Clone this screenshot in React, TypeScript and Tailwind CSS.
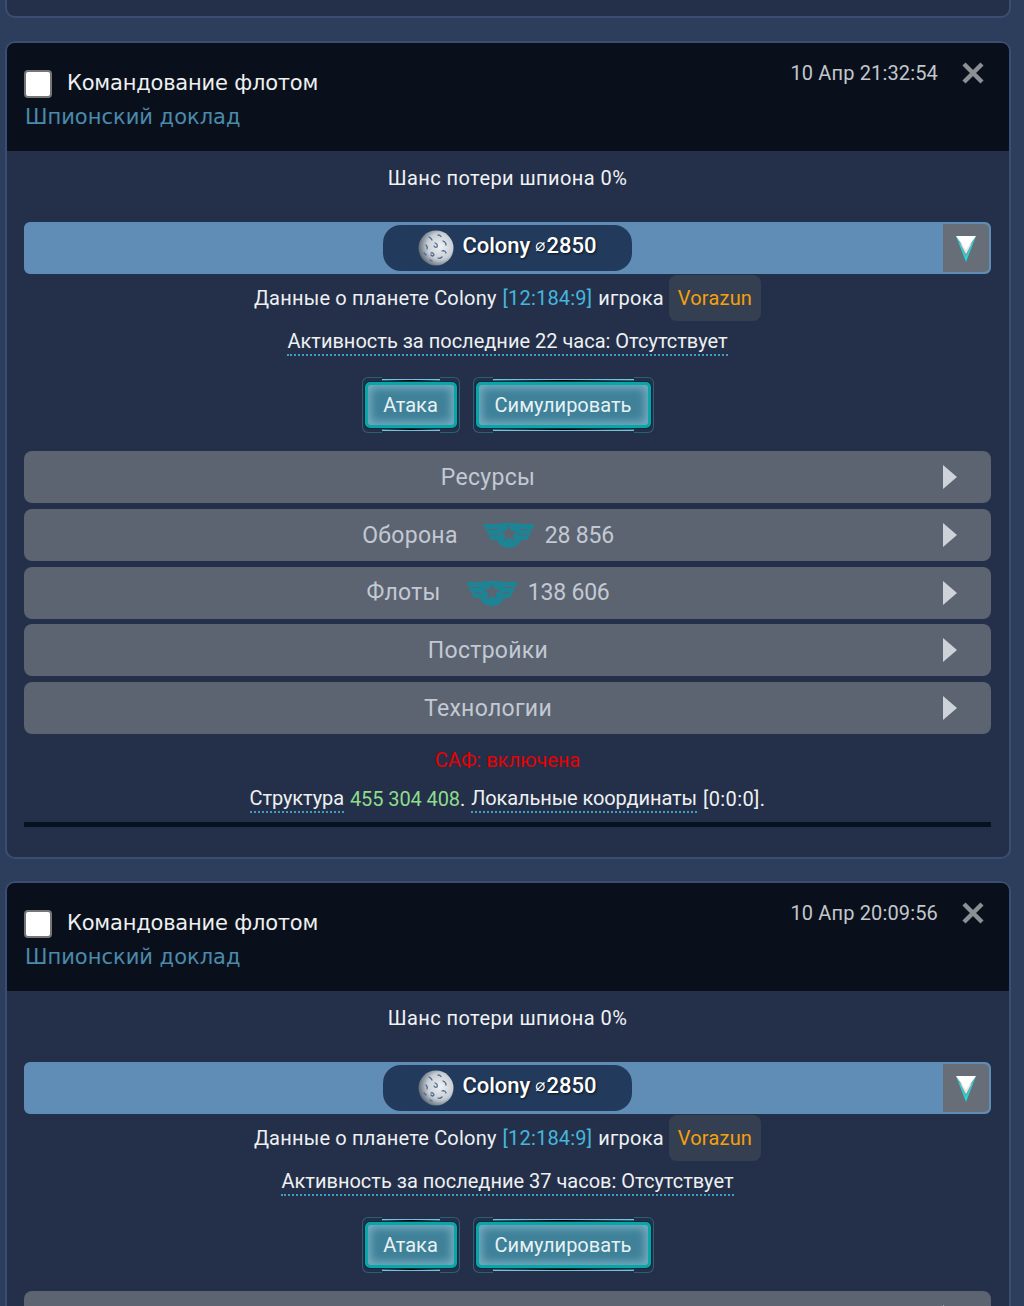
import type { FC } from "react";

const din = "font-['Roboto','Liberation_Sans',sans-serif]";

const Moon: FC<{ id: string }> = ({ id }) => (
    <svg width="36" height="36" viewBox="0 0 36 36" className="shrink-0">
        <defs>
            <radialGradient id={id} cx="62%" cy="45%" r="62%">
                <stop offset="0%" stopColor="#eef1f3" />
                <stop offset="60%" stopColor="#c7ced5" />
                <stop offset="100%" stopColor="#5f6a76" />
            </radialGradient>
        </defs>
        <circle cx="18" cy="18" r="17.5" fill={`url(#${id})`} />
        <g fill="none" stroke="#4f6a92" strokeWidth="1.3" strokeLinecap="round">
            <path d="M11 7 q2 1 3 3" />
            <path d="M20 5 q2 0 3 1.5" />
            <path d="M25 11 q3 1 3 4" />
            <path d="M8 15 q2 2 1 4" />
            <path d="M17 13 q3 1 2 4 q-2 1 -3 -1" />
            <path d="M24 21 q3 -1 4 2" />
            <path d="M13 23 q2 -1 3 2 q-1 2 -3 0" />
            <path d="M6 23 l2 2" />
            <path d="M20 28 q2 1 4 -1" />
            <path d="M12 30 l2 1" />
        </g>
    </svg>
);

const DropArrow = () => (
    <svg width="22" height="27" viewBox="0 0 22 27">
        <path d="M1 1 L11 27 L21 1 L11 11 Z" fill="#17dcd4" />
        <path d="M2 2 L11 22 L20 2 L11 9 Z" fill="#8f949c" />
        <path d="M5 8 L11 19 L17 8 L11 13 Z" fill="#e6e8ec" />
        <path d="M1 1 L21 1 L11 15 Z" fill="#ffffff" />
    </svg>
);

const Wings = () => (
    <svg width="52" height="26" viewBox="0 0 52 26" className="shrink-0">
        <path
            fill="#1c8494"
            fillRule="evenodd"
            d="M0 1 H16 Q26 -3 36 1 H52 L44 17 H38 L36 21 Q26 29 16 21 L14 17 H8 Z M26 2 L23.8 7.9 L17.4 8.2 L22.4 12.2 L20.7 18.3 L26 14.8 L31.3 18.3 L29.6 12.2 L34.6 8.2 L28.2 7.9 Z"
        />
        <path d="M4 6.5 H15 M8 12 H17 M48 6.5 H37 M44 12 H35" stroke="#5c6472" strokeWidth="1" />
    </svg>
);

const FrameButton: FC<{ label: string; width: string }> = ({ label, width }) => (
    <div className={`relative h-[56px] ${width} px-[3px] py-[5px]`}>
        <div className="absolute left-0 top-0 h-full w-[20px] rounded-l-[6px] border border-r-0 border-[#2c6070]" />
        <div className="absolute right-0 top-0 h-full w-[20px] rounded-r-[6px] border border-l-0 border-[#2c6070]" />
        <div className="absolute left-[20px] right-[20px] top-[2px] h-[3px] border-t border-[#7fbcdc] bg-[linear-gradient(90deg,#0a7f88,#000_50%,#0a7f88)]" />
        <div className="absolute bottom-[2px] left-[20px] right-[20px] h-[3px] border-b border-[#7fbcdc] bg-[linear-gradient(90deg,#0a7f88,#000_50%,#0a7f88)]" />
        <div className="relative flex h-full items-center justify-center rounded-[5px] border-[3px] border-[#0aa5a8] bg-[#3f8199] shadow-[inset_0_0_8px_3px_#76aec2,0_0_0_1px_#0d2a3a]">
            <span className="text-[20px] text-[#e8f2f5]">{label}</span>
        </div>
    </div>
);

const Section: FC<{ label: string; value?: string }> = ({ label, value }) => (
    <div className="relative flex h-[52px] items-center justify-center rounded-lg bg-[#5c6472] pr-[39px] pt-[2px]">
        <div className="flex items-center text-[23px] tracking-[0.3px] text-[#c3c9d2]">
            <span>{label}</span>
            {value && (
                <>
                    <span className="ml-[25px] mr-[10px]">
                        <Wings />
                    </span>
                    <span className="tracking-[-0.2px]">{value}</span>
                </>
            )}
        </div>
        <div className="absolute right-[34px] top-[14px] h-0 w-0 border-y-[12px] border-l-[14px] border-y-transparent border-l-[#ced3da]" />
    </div>
);

const dotted = "border-b-2 border-dotted border-[#3f9fc0]";

const Report: FC<{ id: string; time: string; activity: string; full?: boolean }> = ({ id, time, activity, full }) => (
    <div className="ml-[5px] mr-[13px] rounded-[10px] border-2 border-[#3a4d72] bg-[#24304a]">
        <div className="relative h-[108px] rounded-t-[8px] bg-[#0a101b] pl-[17px]">
            <div className="flex items-center pt-[26px]">
                <div className="h-[28px] w-[28px] rounded-[4px] border-2 border-[#767676] bg-white" />
                <span className="ml-[15px] pb-[2px] font-['DejaVu_Sans',sans-serif] text-[21px] leading-[28px] tracking-[-0.2px] text-[#eef0f2]">
                    Командование флотом
                </span>
            </div>
            <div className="ml-[1px] mt-[3px] font-['DejaVu_Sans',sans-serif] text-[21px] leading-[30px] text-[#4a8bad]">
                Шпионский доклад
            </div>
            <div className="absolute right-[71px] top-[15px] text-[20px] leading-[30px] tracking-[0.15px] text-[#c3c7cc]">
                {time}
            </div>
            <svg width="24" height="24" viewBox="0 0 24 24" className="absolute right-[24px] top-[18px]">
                <path d="M3 3 L21 21 M21 3 L3 21" stroke="#8c8f93" strokeWidth="4.5" />
            </svg>
        </div>

        <div className="pl-[17px] pr-[18px]">
            <div className="flex h-[53px] items-center justify-center text-[20px] tracking-[0.43px] text-[#f0f2f4]">
                Шанс потери шпиона 0%
            </div>
            <div className="relative mt-[18px] flex h-[52px] items-center justify-center rounded-[6px] border-2 border-[#5f8db5] bg-[#5f8db5]">
                <div className="flex h-[46px] w-[249px] items-center justify-center gap-[8px] rounded-[18px] bg-[#223a5c]">
                    <Moon id={id} />
                    <span className="flex items-center pb-[5px] text-[22px] font-medium text-white [text-shadow:1px_1px_2px_#0a1420]">
                        Colony
                        <span className="ml-[5px] mr-[1px] font-['DejaVu_Sans',sans-serif] text-[17px] font-normal">⌀</span>
                        2850
                    </span>
                </div>
                <div className="absolute bottom-0 right-0 top-0 flex w-[46px] items-center justify-center rounded-r-[5px] bg-[#686e78]">
                    <DropArrow />
                </div>
            </div>
            <div className="flex h-[47px] items-center justify-center text-[20px] tracking-[0.2px] text-[#eef0f2]">
                <span>Данные о планете Colony</span>
                <span className="ml-[6px] text-[#46b6dc]">[12:184:9]</span>
                <span className="ml-[6px]">игрока</span>
                <span className="ml-[5px] rounded-[8px] bg-[#343f52] px-[9px] py-[9px] leading-[28px] text-[#f5a00c]">
                    Vorazun
                </span>
            </div>
            <div className="mt-[1px] flex h-[40px] items-center justify-center text-[20px] text-[#eef0f2]">
                <span className={`${dotted} leading-[26px]`}>{activity}</span>
            </div>
            <div className="mt-[15px] flex justify-center gap-[13px]">
                <FrameButton label="Атака" width="w-[98px]" />
                <FrameButton label="Симулировать" width="w-[181px]" />
            </div>
            <div className="mt-[18px] flex flex-col gap-[5.75px]">
                <Section label="Ресурсы" />
                {full && (
                    <>
                        <Section label="Оборона" value="28 856" />
                        <Section label="Флоты" value="138 606" />
                        <Section label="Постройки" />
                        <Section label="Технологии" />
                    </>
                )}
            </div>
            {full && (
                <>
                    <div className="mt-[11px] flex h-[30px] items-center justify-center text-[20px] text-[#e60000]">
                        САФ: включена
                    </div>
                    <div className="mt-[9px] flex h-[30px] items-center justify-center text-[20px] tracking-[-0.1px] text-[#eef0f2]">
                        <span className={`${dotted} leading-[25px]`}>Структура</span>
                        <span className="ml-[6px] text-[#8fdc8c]">455 304 408</span>
                        <span>.</span>
                        <span className={`${dotted} ml-[6px] leading-[25px]`}>Локальные координаты</span>
                        <span className="ml-[6px] tracking-[0.4px]">[0:0:0].</span>
                    </div>
                    <div className="mt-[8px] h-[5px] bg-[#03141f]" />
                    <div className="h-[30px]" />
                </>
            )}
        </div>
    </div>
);

export default function App() {
    return (
        <div className={`h-[1306px] w-[1024px] overflow-hidden bg-[#2d3e5c] ${din}`}>
            <div className="ml-[5px] mr-[13px] h-[18px] rounded-b-[10px] border-2 border-t-0 border-[#3a4d72] bg-[#24304a]" />
            <div className="mt-[23px] flex flex-col gap-[22px]">
                <Report id="moon-a" time="10 Апр 21:32:54" activity="Активность за последние 22 часа: Отсутствует" full />
                <Report id="moon-b" time="10 Апр 20:09:56" activity="Активность за последние 37 часов: Отсутствует" />
            </div>
        </div>
    );
}
